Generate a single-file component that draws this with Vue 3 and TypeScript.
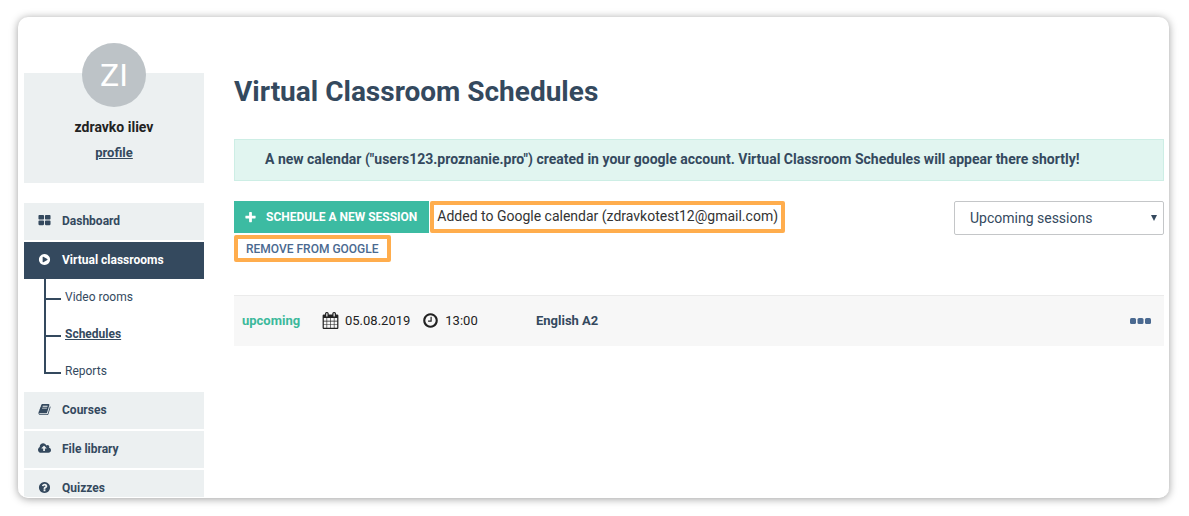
<script setup lang="ts">
import { ref } from 'vue'

interface NavItem {
  label: string
  viewBox: string
  icon: string
  active?: boolean
  children?: { label: string; current?: boolean }[]
}

interface Session {
  status: string
  date: string
  time: string
  title: string
}

const navItems: NavItem[] = [
  {
    label: 'Dashboard',
    viewBox: '0 0 1792 1792',
    icon: 'M832 1024v384q0 52-38 90t-90 38h-512q-52 0-90-38t-38-90v-384q0-52 38-90t90-38h512q52 0 90 38t38 90zm0-768v384q0 52-38 90t-90 38h-512q-52 0-90-38t-38-90v-384q0-52 38-90t90-38h512q52 0 90 38t38 90zm896 768v384q0 52-38 90t-90 38h-512q-52 0-90-38t-38-90v-384q0-52 38-90t90-38h512q52 0 90 38t38 90zm0-768v384q0 52-38 90t-90 38h-512q-52 0-90-38t-38-90v-384q0-52 38-90t90-38h512q52 0 90 38t38 90z',
  },
  {
    label: 'Virtual classrooms',
    viewBox: '0 0 1792 1792',
    icon: 'M896 128q209 0 385.500 103t279.500 279.500 103 385.500-103 385.500-279.500 279.500-385.500 103-385.500-103-279.500-279.500-103-385.500 103-385.500 279.500-279.500 385.500-103zm384 823q32-18 32-55t-32-55l-544-320q-31-19-64-1-32 19-32 56v640q0 37 32 56 16 8 32 8 17 0 32-9z',
    active: true,
    children: [
      { label: 'Video rooms' },
      { label: 'Schedules', current: true },
      { label: 'Reports' },
    ],
  },
  {
    label: 'Courses',
    viewBox: '0 0 1792 1792',
    icon: 'M1703 478q40 57 18 129l-275 906q-19 64-76.500 107.500t-122.500 43.500h-923q-77 0-148.500-53.500t-99.500-131.500q-24-67-2-127 0-4 3-27t4-37q1-8-3-21.500t-3-19.500q2-11 8-21t16.500-23.500 16.500-23.500q23-38 45-91.500t30-91.500q3-10 .5-30t-.5-28q3-11 17-28t17-23q21-36 42-92t25-90q1-9-2.500-32t.5-28q4-13 22-30.500t22-22.500q19-26 42.500-84.500t27.500-96.500q1-8-3-25.500t-2-26.500q2-8 9-18t18-23 17-21q8-12 16.500-30.500t15-35 16-36 19.500-32 26.500-23.500 36-11.500 47.500 5.500l-1 3q38-9 51-9h761q74 0 114 56t18 130l-274 906q-36 119-71.500 153.500t-128.500 34.500h-869q-27 0-38 15-11 16-1 43 24 70 144 70h923q29 0 56-15.500t35-41.500l300-987q7-22 5-57 38 15 59 43zm-1064 2q-4 13 2 22.500t20 9.500h608q13 0 25.500-9.500t16.500-22.500l21-64q4-13-2-22.500t-20-9.500h-608q-13 0-25.500 9.500t-16.500 22.500zm-83 256q-4 13 2 22.500t20 9.500h608q13 0 25.500-9.500t16.500-22.500l21-64q4-13-2-22.500t-20-9.500h-608q-13 0-25.500 9.500t-16.500 22.500z',
  },
  {
    label: 'File library',
    viewBox: '-64 0 1920 1792',
    icon: 'M1216 864q0-14-9-23l-352-352q-9-9-23-9t-23 9l-351 351q-10 12-10 24 0 14 9 23t23 9h224v352q0 13 9.500 22.500t22.500 9.500h192q13 0 22.500-9.500t9.500-22.500v-352h224q13 0 22.500-9.500t9.500-22.500zm640 288q0 159-112.500 271.500t-271.500 112.500h-1088q-185 0-316.500-131.500t-131.500-316.500q0-130 70-240t188-165q-2-30-2-43 0-212 150-362t362-150q156 0 285.500 87t188.500 231q71-62 166-62 106 0 181 75t75 181q0 76-41 138 130 31 213.500 135.500t83.500 238.500z',
  },
  {
    label: 'Quizzes',
    viewBox: '0 0 1792 1792',
    icon: 'M1024 1376v-192q0-14-9-23t-23-9h-192q-14 0-23 9t-9 23v192q0 14 9 23t23 9h192q14 0 23-9t9-23zm256-672q0-88-55.500-163t-138.500-116-170-41q-243 0-371 213-15 24 8 42l132 100q7 6 19 6 16 0 25-12 53-68 86-92 34-24 86-24 48 0 85.500 26t37.500 59q0 38-20 61t-68 45q-63 28-115.500 86.500t-52.500 125.500v36q0 14 9 23t23 9h192q14 0 23-9t9-23q0-19 21.500-49.500t54.500-49.500q32-18 49-28.500t46-35 44.500-48 28-60.500 12.500-81zm384 192q0 209-103 385.500t-279.500 279.500-385.500 103-385.500-103-279.500-279.500-103-385.500 103-385.500 279.500-279.500 385.500-103 385.500 103 279.500 279.500 103 385.500z',
  },
]

const sessions: Session[] = [
  { status: 'upcoming', date: '05.08.2019', time: '13:00', title: 'English A2' },
]

const filter = ref('upcoming')
</script>

<template>
  <div class="page">
    <div class="card">
      <aside class="sidebar">
        <section class="profile">
          <div class="avatar">ZI</div>
          <div class="name">zdravko iliev</div>
          <a class="profile-link" href="#profile">profile</a>
        </section>
        <nav aria-label="Main">
          <ul class="nav">
            <li v-for="item in navItems" :key="item.label">
              <a class="nav-link" :class="{ active: item.active }" :href="'#' + item.label">
                <svg class="nav-icon" :viewBox="item.viewBox" aria-hidden="true"><path :d="item.icon" /></svg>
                {{ item.label }}
              </a>
              <ul v-if="item.children" class="subnav">
                <li v-for="child in item.children" :key="child.label">
                  <a :class="{ current: child.current }" :href="'#' + child.label">{{ child.label }}</a>
                </li>
              </ul>
            </li>
          </ul>
        </nav>
      </aside>

      <main class="main">
        <h1>Virtual Classroom Schedules</h1>
        <p class="notice" role="status">
          A new calendar ("users123.proznanie.pro") created in your google account. Virtual Classroom Schedules will appear there shortly!
        </p>

        <div class="toolbar">
          <div class="actions">
            <button class="schedule" type="button">
              <svg class="plus" viewBox="0 0 1792 1792" aria-hidden="true">
                <path d="M1600 736v192q0 40-28 68t-68 28h-416v416q0 40-28 68t-68 28h-192q-40 0-68-28t-28-68v-416h-416q-40 0-68-28t-28-68v-192q0-40 28-68t68-28h416v-416q0-40 28-68t68-28h192q40 0 68 28t28 68v416h416q40 0 68 28t28 68z" />
              </svg>
              SCHEDULE A NEW SESSION
            </button>
            <span class="added">Added to Google calendar (zdravkotest12@gmail.com)</span>
            <button class="remove" type="button">REMOVE FROM GOOGLE</button>
          </div>
          <div class="filter">
            <select v-model="filter" aria-label="Filter sessions">
              <option value="upcoming">Upcoming sessions</option>
              <option value="past">Past sessions</option>
            </select>
            <svg class="caret" viewBox="0 0 6 6" aria-hidden="true"><path d="M0 0h6L3 6z" /></svg>
          </div>
        </div>

        <table class="sessions" aria-label="Sessions">
          <colgroup>
            <col class="col-status" />
            <col class="col-when" />
            <col />
            <col class="col-menu" />
          </colgroup>
          <tbody>
            <tr v-for="session in sessions" :key="session.title">
              <td class="status">{{ session.status }}</td>
              <td>
                <div class="when">
                  <svg class="when-icon" viewBox="0 0 1792 1792" aria-hidden="true">
                    <path d="M192 1664h288v-288h-288v288zm352 0h320v-288h-320v288zm-352-352h288v-320h-288v320zm352 0h320v-320h-320v320zm-352-384h288v-288h-288v288zm736 736h320v-288h-320v288zm-384-736h320v-288h-320v288zm768 736h288v-288h-288v288zm-384-352h320v-320h-320v320zm-352-864v-288q0-13-9.500-22.500t-22.500-9.500h-64q-13 0-22.500 9.500t-9.500 22.500v288q0 13 9.500 22.500t22.500 9.500h64q13 0 22.500-9.500t9.500-22.500zm736 864h288v-320h-288v320zm-384-384h320v-288h-320v288zm384 0h288v-288h-288v288zm32-480v-288q0-13-9.500-22.500t-22.500-9.500h-64q-13 0-22.500 9.500t-9.500 22.500v288q0 13 9.500 22.500t22.500 9.500h64q13 0 22.500-9.500t9.500-22.500zm384-64v1280q0 52-38 90t-90 38h-1408q-52 0-90-38t-38-90v-1280q0-52 38-90t90-38h128v-96q0-66 47-113t113-47h64q66 0 113 47t47 113v96h384v-96q0-66 47-113t113-47h64q66 0 113 47t47 113v96h128q52 0 90 38t38 90z" />
                  </svg>
                  <span class="date">{{ session.date }}</span>
                  <svg class="when-icon" viewBox="0 0 1792 1792" aria-hidden="true">
                    <path d="M1024 544v448q0 14-9 23t-23 9h-320q-14 0-23-9t-9-23v-64q0-14 9-23t23-9h224v-352q0-14 9-23t23-9h64q14 0 23 9t9 23zm416 352q0-148-73-273t-198-198-273-73-273 73-198 198-73 273 73 273 198 198 273 73 273-73 198-198 73-273zm224 0q0 209-103 385.500t-279.500 279.500-385.500 103-385.500-103-279.500-279.500-103-385.500 103-385.500 279.500-279.500 385.500-103 385.500 103 279.500 279.500 103 385.500z" />
                  </svg>
                  <span>{{ session.time }}</span>
                </div>
              </td>
              <td class="title">{{ session.title }}</td>
              <td>
                <button class="menu" type="button" aria-label="Session actions">
                  <svg viewBox="0 0 21 6" aria-hidden="true">
                    <rect width="6" height="6" rx="1.5" />
                    <rect x="7.500" width="6" height="6" rx="1.5" />
                    <rect x="15" width="6" height="6" rx="1.5" />
                  </svg>
                </button>
              </td>
            </tr>
          </tbody>
        </table>
      </main>
    </div>
  </div>
</template>

<style>
body {
  margin: 0;
  background: #fff;
}
</style>

<style scoped>
*,
*::before {
  box-sizing: border-box;
}

.page {
  height: 100vh;
  padding: 17px 20px 18px 18px;
  font-family: Roboto, "Liberation Sans", sans-serif;
  font-size: 14px;
  line-height: 20px;
  color: #34495e;
}

.card {
  display: flex;
  gap: 30px;
  height: 100%;
  padding: 26px 5px 0 6px;
  overflow: hidden;
  border-bottom: 1px solid #fff;
  border-radius: 10px;
  background: #fff;
  box-shadow: 0 1px 8px rgba(0, 0, 0, 0.38);
}

ul {
  margin: 0;
  padding: 0;
  list-style: none;
}

button {
  font-family: inherit;
  cursor: pointer;
}

svg {
  display: block;
  flex: none;
  fill: currentColor;
}

.sidebar {
  flex: 0 0 180px;
}

.profile {
  display: flex;
  flex-direction: column;
  align-items: center;
  gap: 6px;
  height: 110px;
  margin: 30px 0 20px;
  background: #ecf0f1;
}

.avatar {
  flex: none;
  width: 64px;
  height: 64px;
  margin: -30px 0 4px;
  border-radius: 50%;
  background: #bdc3c7;
  color: #fff;
  font-size: 32px;
  line-height: 64px;
  text-align: center;
}

.name {
  color: #222;
  font-weight: 700;
}

.profile-link {
  color: #34495e;
  font-size: 13px;
  font-weight: 700;
}

.nav > li {
  margin-bottom: 2px;
}

.nav-link {
  display: flex;
  align-items: center;
  gap: 11px;
  height: 37px;
  padding: 0 14px 2px;
  background: #ecf0f1;
  color: #34495e;
  font-size: 12px;
  font-weight: 700;
  text-decoration: none;
}

.nav-link.active {
  background: #34495e;
  color: #fff;
}

.nav-icon {
  width: 13px;
  height: 13px;
}

.subnav li {
  position: relative;
  height: 37px;
  padding-left: 41px;
  font-size: 12px;
  line-height: 36px;
}

.subnav li::before {
  content: "";
  position: absolute;
  left: 20px;
  bottom: 16px;
  width: 17px;
  height: 37px;
  border: solid #34495e;
  border-width: 0 0 2px 2px;
}

.subnav li:first-child::before {
  height: 21px;
}

.subnav a {
  color: #34495e;
  text-decoration: none;
}

.subnav .current {
  font-weight: 700;
  text-decoration: underline;
}

.main {
  flex: 1;
  min-width: 0;
  padding-top: 30px;
}

h1 {
  margin: 0 0 28px;
  font-size: 28px;
  font-weight: 700;
  line-height: 38px;
}

.notice {
  margin: 0 0 20px;
  padding: 9px 30px 11px;
  border: 1px solid #cdeee5;
  background: #e1f5f0;
  font-weight: 700;
}

.toolbar {
  display: flex;
  justify-content: space-between;
  align-items: flex-start;
  margin-bottom: 33px;
}

.actions {
  display: flex;
  flex: 0 1 600px;
  flex-wrap: wrap;
  gap: 2px 1px;
}

.schedule {
  display: flex;
  align-items: center;
  gap: 9px;
  height: 32px;
  padding: 0 12px 0 10px;
  border: 0;
  background: #3cbba2;
  color: #fff;
  font-size: 12px;
  font-weight: 700;
}

.plus {
  width: 13px;
  height: 13px;
}

.added,
.remove {
  border: 4px solid #ffad4d;
  border-radius: 2px;
}

.added {
  height: 32px;
  padding: 0 3px;
  color: #333;
  line-height: 22px;
}

.remove {
  height: 27px;
  padding: 0 8px;
  background: #fff;
  color: #4a6990;
  font-size: 12px;
  font-weight: 500;
}

.filter {
  position: relative;
  flex: 0 0 210px;
}

select {
  width: 100%;
  height: 34px;
  padding: 0 15px;
  border: 1px solid #c4c6c8;
  border-radius: 2px;
  appearance: none;
  background: #fff;
  color: #34495e;
  font-family: inherit;
  font-size: 14px;
}

.caret {
  position: absolute;
  top: 14px;
  right: 7px;
  width: 6px;
  height: 6px;
  pointer-events: none;
}

.sessions {
  width: 100%;
  border-collapse: collapse;
  border-top: 1px solid #ebebeb;
  table-layout: fixed;
  background: #f7f7f7;
  font-size: 13px;
}

.col-status {
  width: 88px;
}

.col-when {
  width: 214px;
}

.col-menu {
  width: 34px;
}

td {
  height: 50px;
  padding: 0;
}

td.status {
  padding-left: 8px;
  color: #3cb99b;
  font-weight: 700;
}

.when {
  display: flex;
  align-items: center;
  gap: 6px;
  color: #222;
}

.date {
  margin-right: 6px;
}

.when-icon {
  width: 17px;
  height: 17px;
}

.title {
  font-weight: 700;
}

.menu {
  display: block;
  padding: 5px 0;
  border: 0;
  background: none;
  color: #4a6990;
}

.menu svg {
  width: 21px;
  height: 6px;
}
</style>
